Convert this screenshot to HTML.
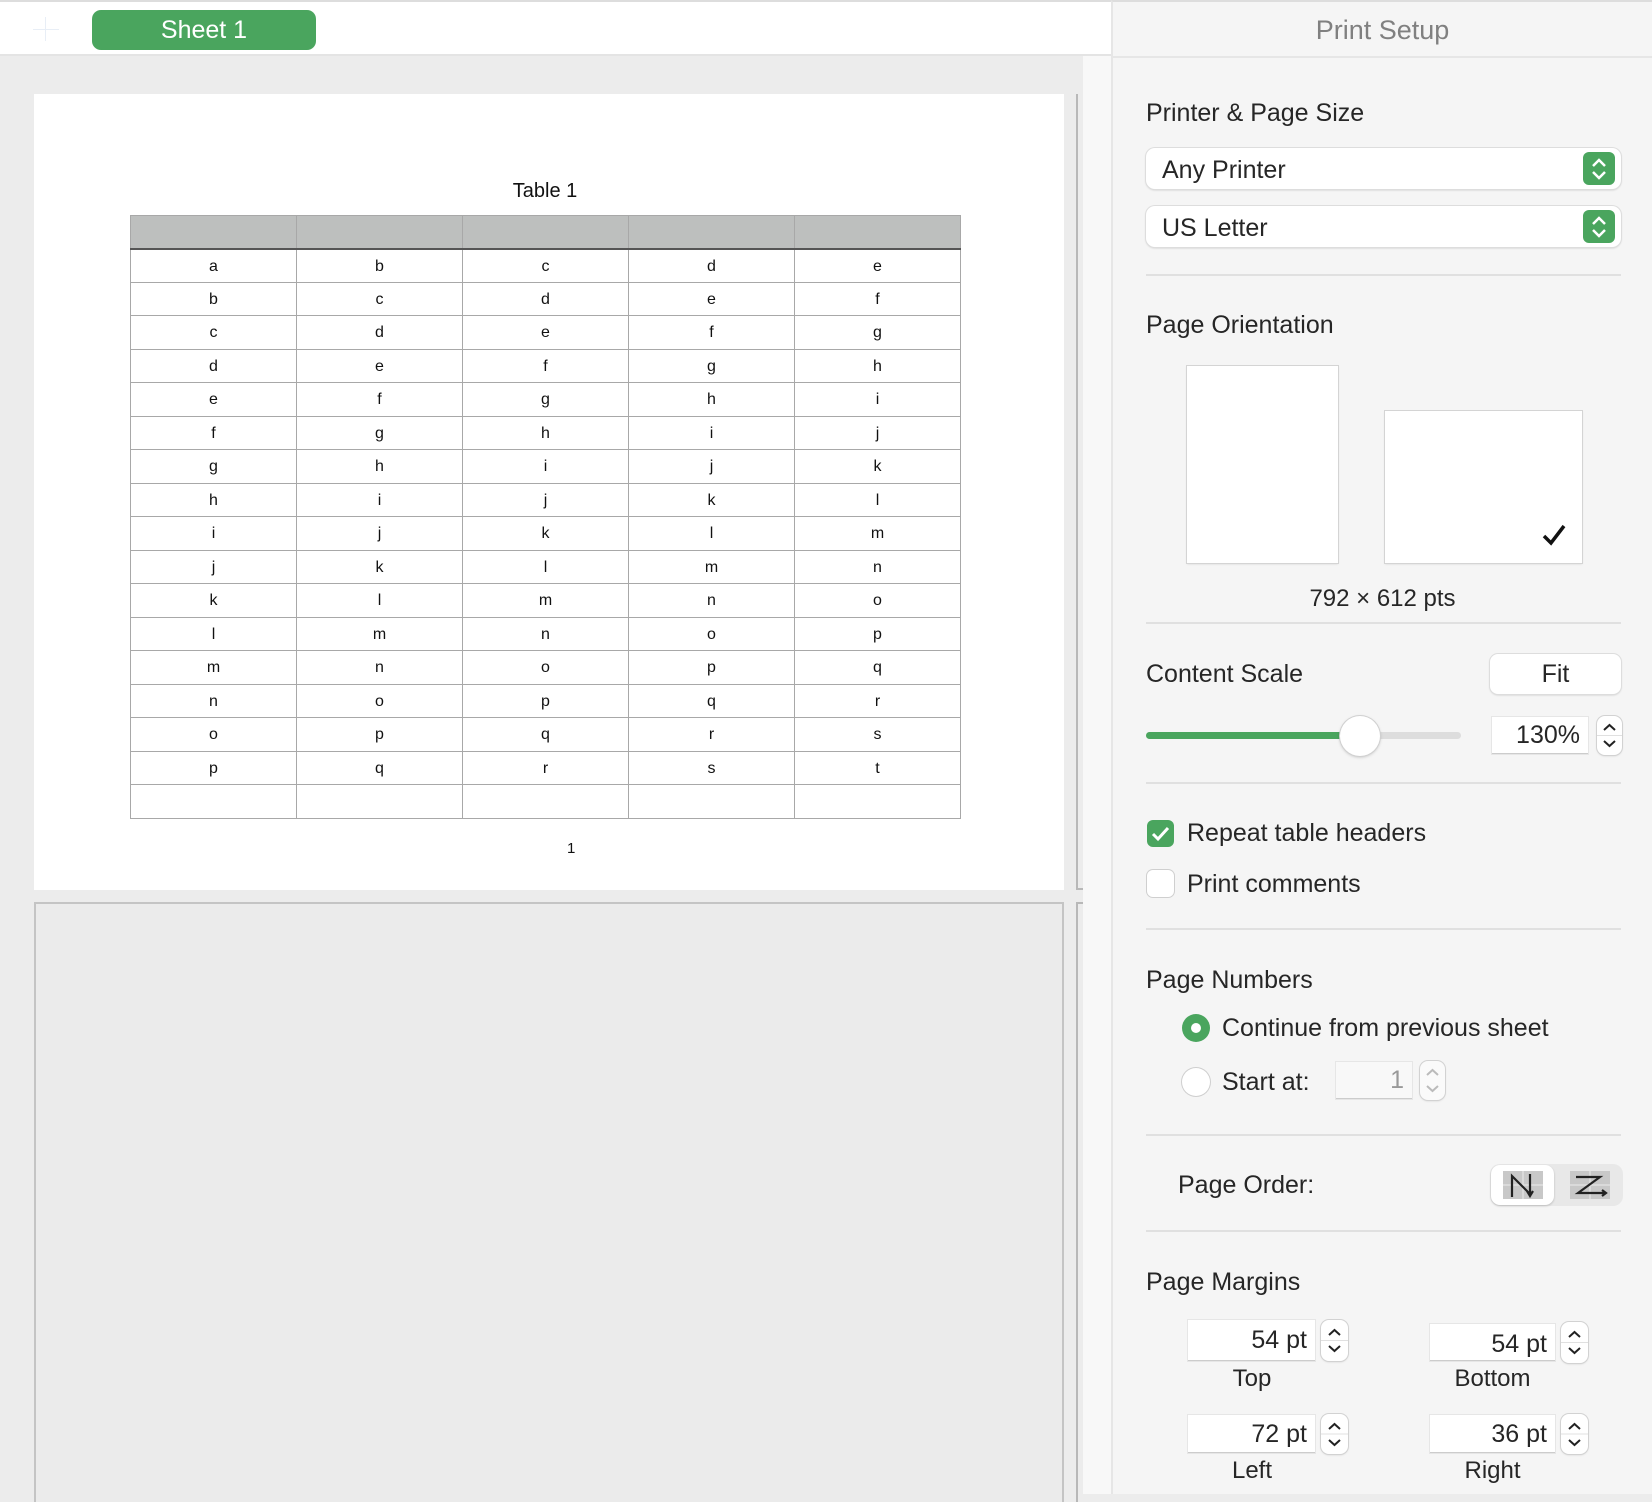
<!DOCTYPE html>
<html><head><meta charset="utf-8"><style>
*{box-sizing:border-box;margin:0;padding:0}
body{width:1652px;height:1494px;overflow:hidden;background:#ececec;font-family:"Liberation Sans",sans-serif;color:#262626;position:relative}
.a{position:absolute}
.lbl{position:absolute;font-size:25px;line-height:1;white-space:nowrap}
.sep{position:absolute;left:1146px;width:475px;height:2px;background:#e0e0e0}
table{border-collapse:collapse;position:absolute;left:130px;top:215px;width:831px;table-layout:fixed}
td{border:1px solid #a8a8a8;height:33.5px;text-align:center;font-size:16px;color:#111;padding-top:2px}
tr.h td{background:#bdbfbe;height:33px;border-bottom:2px solid #555}
.fld{position:absolute;background:#fff;border-bottom:1px solid #ccc;box-shadow:0 0 0 1px #e6e6e6;font-size:25px;text-align:right;padding-right:8px}
.stp{position:absolute;width:27px;background:#fff;border-radius:8px;box-shadow:0 0 0 1px #d2d2d2,0 1px 2px rgba(0,0,0,.15)}
.dd{position:absolute;left:1146px;width:475px;height:41px;background:#fff;border-radius:9px;box-shadow:0 0 0 1px #ddd,0 1px 2px rgba(0,0,0,.2);font-size:25px;padding:8px 0 0 16px}
.gb{position:absolute;right:6px;top:4px;width:32px;height:33px;border-radius:6px;background:#4aa55e}
</style></head><body>
<div class="a" style="left:0;top:0;width:1112px;height:56px;background:#fff;border-top:2px solid #ddd;border-bottom:2px solid #e4e4e4"></div>
<div class="a" style="left:33px;top:29px;width:26px;height:1px;background:#e8eef6"></div>
<div class="a" style="left:45px;top:17px;width:1px;height:24px;background:#e8eef6"></div>
<div class="a" style="left:92px;top:10px;width:224px;height:40px;background:#4aa55e;border-radius:9px;color:#fff;font-size:25px;text-align:center;line-height:40px">Sheet 1</div>

<div class="a" style="left:34px;top:94px;width:1030px;height:796px;background:#fff"></div>
<div class="lbl" style="left:0;width:1090px;text-align:center;top:181px;font-size:20px;color:#111">Table 1</div>
<table>
<tr class="h"><td></td><td></td><td></td><td></td><td></td></tr>
<tr><td>a</td><td>b</td><td>c</td><td>d</td><td>e</td></tr>
<tr><td>b</td><td>c</td><td>d</td><td>e</td><td>f</td></tr>
<tr><td>c</td><td>d</td><td>e</td><td>f</td><td>g</td></tr>
<tr><td>d</td><td>e</td><td>f</td><td>g</td><td>h</td></tr>
<tr><td>e</td><td>f</td><td>g</td><td>h</td><td>i</td></tr>
<tr><td>f</td><td>g</td><td>h</td><td>i</td><td>j</td></tr>
<tr><td>g</td><td>h</td><td>i</td><td>j</td><td>k</td></tr>
<tr><td>h</td><td>i</td><td>j</td><td>k</td><td>l</td></tr>
<tr><td>i</td><td>j</td><td>k</td><td>l</td><td>m</td></tr>
<tr><td>j</td><td>k</td><td>l</td><td>m</td><td>n</td></tr>
<tr><td>k</td><td>l</td><td>m</td><td>n</td><td>o</td></tr>
<tr><td>l</td><td>m</td><td>n</td><td>o</td><td>p</td></tr>
<tr><td>m</td><td>n</td><td>o</td><td>p</td><td>q</td></tr>
<tr><td>n</td><td>o</td><td>p</td><td>q</td><td>r</td></tr>
<tr><td>o</td><td>p</td><td>q</td><td>r</td><td>s</td></tr>
<tr><td>p</td><td>q</td><td>r</td><td>s</td><td>t</td></tr>
<tr><td></td><td></td><td></td><td></td><td></td></tr>
</table>
<div class="lbl" style="left:567px;top:841px;font-size:15px;color:#111">1</div>
<div class="a" style="left:34px;top:902px;width:1030px;height:600px;border:2px solid #c4c4c4;border-bottom:none;background:#ebebeb"></div>
<div class="a" style="left:1076px;top:94px;width:8px;height:796px;border-left:2px solid #b8b8b8;border-bottom:2px solid #b8b8b8"></div>
<div class="a" style="left:1076px;top:902px;width:8px;height:600px;border-left:2px solid #b8b8b8;border-top:2px solid #b8b8b8"></div>
<div class="a" style="left:1083px;top:56px;width:28px;height:1438px;background:#f8f8f8"></div>

<div class="a" style="left:1111px;top:0;width:541px;height:1494px;background:#f5f5f5;border-left:2px solid #e6e6e6;border-top:2px solid #ddd"></div>
<div class="a" style="left:1113px;top:56px;width:539px;height:2px;background:#e6e6e6"></div>
<div class="lbl" style="left:1113px;width:539px;text-align:center;top:17px;font-size:27px;color:#808080">Print Setup</div>

<div class="lbl" style="left:1146px;top:101px">Printer &amp; Page Size</div>
<div class="dd" style="top:148px">Any Printer<div class="gb"><svg width="32" height="33"><path d="M10 14l6-6 6 6M10 20l6 6 6-6" stroke="#fff" stroke-width="2.5" fill="none"/></svg></div></div>
<div class="dd" style="top:206px">US Letter<div class="gb"><svg width="32" height="33"><path d="M10 14l6-6 6 6M10 20l6 6 6-6" stroke="#fff" stroke-width="2.5" fill="none"/></svg></div></div>
<div class="sep" style="top:274px"></div>

<div class="lbl" style="left:1146px;top:313px">Page Orientation</div>
<div class="a" style="left:1187px;top:366px;width:151px;height:197px;background:#fff;box-shadow:0 0 0 1px #d4d4d4,0 1px 2px rgba(0,0,0,.15)"></div>
<div class="a" style="left:1385px;top:411px;width:197px;height:152px;background:#fff;box-shadow:0 0 0 1px #d4d4d4,0 1px 2px rgba(0,0,0,.15)"></div>
<svg class="a" style="left:1541px;top:523px" width="26" height="24"><path d="M3 13l7 7L23 3" stroke="#111" stroke-width="3.5" fill="none"/></svg>
<div class="lbl" style="left:1113px;width:539px;text-align:center;top:587px;font-size:24px">792 × 612 pts</div>
<div class="sep" style="top:622px"></div>

<div class="lbl" style="left:1146px;top:662px">Content Scale</div>
<div class="a" style="left:1490px;top:654px;width:131px;height:40px;background:#fff;border-radius:8px;box-shadow:0 0 0 1px #ddd,0 1px 2px rgba(0,0,0,.2);font-size:25px;text-align:center;line-height:40px">Fit</div>
<div class="a" style="left:1146px;top:732px;width:315px;height:7px;border-radius:4px;background:#ddd"></div>
<div class="a" style="left:1146px;top:732px;width:214px;height:7px;border-radius:4px;background:#4aa55e"></div>
<div class="a" style="left:1340px;top:716px;width:40px;height:40px;border-radius:50%;background:#fff;box-shadow:0 0 0 1px #d0d0d0,0 1px 3px rgba(0,0,0,.25)"></div>
<div class="fld" style="left:1492px;top:717px;width:96px;height:37px;line-height:37px">130%</div>
<div class="stp" style="left:1597px;top:716px;height:39px;width:25px"><svg width="25" height="39"><path d="M7 14l5.5-5 5.5 5M7 25l5.5 5 5.5-5" stroke="#222" stroke-width="2" fill="none"/><path d="M0 19.5h25" stroke="#e0e0e0"/></svg></div>
<div class="sep" style="top:782px"></div>

<div class="a" style="left:1147px;top:820px;width:27px;height:27px;border-radius:6px;background:#4aa55e"><svg width="27" height="27"><path d="M6 14l5 5 10-11" stroke="#fff" stroke-width="3" fill="none"/></svg></div>
<div class="lbl" style="left:1187px;top:821px">Repeat table headers</div>
<div class="a" style="left:1147px;top:870px;width:27px;height:27px;border-radius:6px;background:#fff;box-shadow:0 0 0 1px #cfcfcf"></div>
<div class="lbl" style="left:1187px;top:872px">Print comments</div>
<div class="sep" style="top:928px"></div>

<div class="lbl" style="left:1146px;top:968px">Page Numbers</div>
<div class="a" style="left:1182px;top:1014px;width:28px;height:28px;border-radius:50%;background:#4aa55e"><div class="a" style="left:9px;top:9px;width:10px;height:10px;border-radius:50%;background:#fff"></div></div>
<div class="lbl" style="left:1222px;top:1016px">Continue from previous sheet</div>
<div class="a" style="left:1182px;top:1068px;width:28px;height:28px;border-radius:50%;background:#fff;box-shadow:0 0 0 1px #cfcfcf"></div>
<div class="lbl" style="left:1222px;top:1070px">Start at:</div>
<div class="fld" style="left:1336px;top:1062px;width:76px;height:37px;line-height:37px;color:#999;background:#f8f8f8">1</div>
<div class="stp" style="left:1420px;top:1061px;height:39px;width:25px;background:#fafafa"><svg width="25" height="39"><path d="M7 14l5.5-5 5.5 5M7 25l5.5 5 5.5-5" stroke="#bbb" stroke-width="2" fill="none"/></svg></div>
<div class="sep" style="top:1134px"></div>

<div class="lbl" style="left:1178px;top:1173px">Page Order:</div>
<div class="a" style="left:1490px;top:1164px;width:133px;height:42px;border-radius:10px;background:#e8e8e8"></div>
<div class="a" style="left:1491px;top:1165px;width:63px;height:40px;border-radius:9px;background:#fff;box-shadow:0 1px 2px rgba(0,0,0,.2)"></div>
<svg class="a" style="left:1503px;top:1171px" width="40" height="28"><rect width="40" height="28" fill="#c8c8c8"/><path d="M20 0v28M0 14h40" stroke="#e0e0e0" stroke-width="1.5"/><path d="M9 26V5l18 18V3M24 20l3 5 3-5" stroke="#222" stroke-width="2.2" fill="none"/></svg>
<svg class="a" style="left:1570px;top:1171px" width="40" height="28"><rect width="40" height="28" fill="#c8c8c8"/><path d="M20 0v28M0 14h40" stroke="#e0e0e0" stroke-width="1.5"/><path d="M6 6h24L8 22h28M32 19l4 3-4 3" stroke="#222" stroke-width="2.2" fill="none"/></svg>
<div class="sep" style="top:1230px"></div>

<div class="lbl" style="left:1146px;top:1270px">Page Margins</div>
<div class="fld" style="left:1188px;top:1320px;width:127px;height:41px;line-height:41px">54 pt</div>
<div class="stp" style="left:1321px;top:1320px;height:41px"><svg width="27" height="41"><path d="M8 15l5.5-5 5.5 5M8 26l5.5 5 5.5-5" stroke="#222" stroke-width="2" fill="none"/><path d="M0 20.5h27" stroke="#e0e0e0"/></svg></div>
<div class="lbl" style="left:1188px;width:128px;text-align:center;top:1367px;font-size:24px">Top</div>
<div class="fld" style="left:1430px;top:1324px;width:125px;height:37px;line-height:41px">54 pt</div>
<div class="stp" style="left:1561px;top:1322px;height:41px"><svg width="27" height="41"><path d="M8 15l5.5-5 5.5 5M8 26l5.5 5 5.5-5" stroke="#222" stroke-width="2" fill="none"/><path d="M0 20.5h27" stroke="#e0e0e0"/></svg></div>
<div class="lbl" style="left:1430px;width:125px;text-align:center;top:1367px;font-size:24px">Bottom</div>
<div class="fld" style="left:1188px;top:1415px;width:127px;height:38px;line-height:38px">72 pt</div>
<div class="stp" style="left:1321px;top:1414px;height:40px"><svg width="27" height="40"><path d="M8 15l5.5-5 5.5 5M8 26l5.5 5 5.5-5" stroke="#222" stroke-width="2" fill="none"/><path d="M0 20h27" stroke="#e0e0e0"/></svg></div>
<div class="lbl" style="left:1188px;width:128px;text-align:center;top:1459px;font-size:24px">Left</div>
<div class="fld" style="left:1430px;top:1415px;width:125px;height:38px;line-height:38px">36 pt</div>
<div class="stp" style="left:1561px;top:1414px;height:40px"><svg width="27" height="40"><path d="M8 15l5.5-5 5.5 5M8 26l5.5 5 5.5-5" stroke="#222" stroke-width="2" fill="none"/><path d="M0 20h27" stroke="#e0e0e0"/></svg></div>
<div class="lbl" style="left:1430px;width:125px;text-align:center;top:1459px;font-size:24px">Right</div>
</body></html>
